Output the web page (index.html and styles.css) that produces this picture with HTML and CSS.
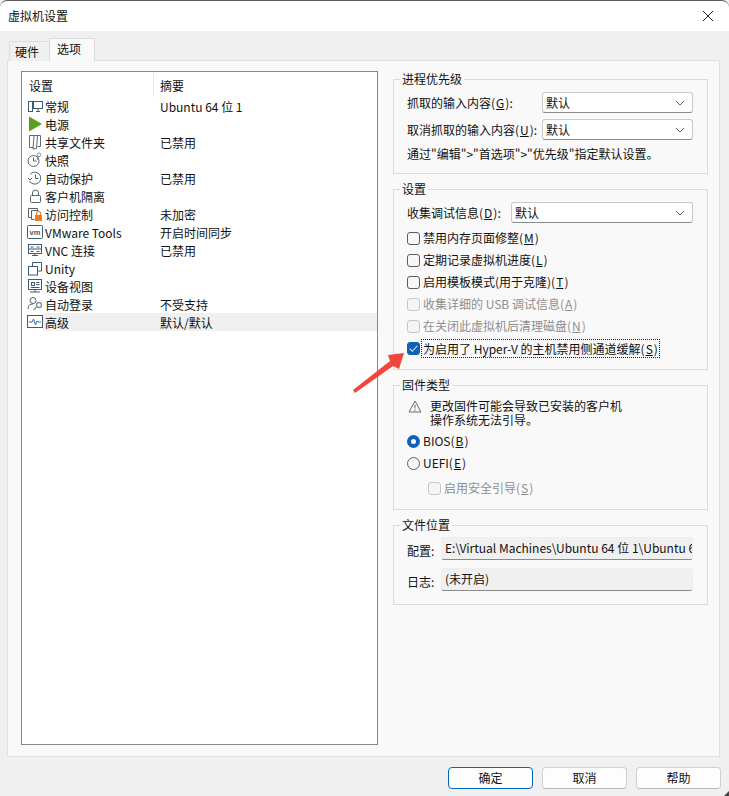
FILE: index.html
```html
<!DOCTYPE html>
<html lang="zh-CN">
<head>
<meta charset="utf-8">
<title>虚拟机设置</title>
<link rel="stylesheet" href="styles.css">
</head>
<body>
<div class="window">
  <header class="titlebar">
    <span>虚拟机设置</span>
    <svg class="close" viewBox="0 0 12 12"><path d="M1 1l10 10M11 1L1 11"/></svg>
  </header>
  <nav class="tabs">
    <div class="tab">硬件</div>
    <div class="tab active">选项</div>
  </nav>
  <main class="panel">
    <section class="list">
      <div class="list-head">
        <span class="head-a">设置</span>
        <span class="head-b">摘要</span>
      </div>
      <div class="row">
        <svg class="ico" viewBox="0 0 16 16"><g fill="none" stroke="#3f5b73"><rect x="1.500" y="3.500" width="4" height="10"/><rect x="6.500" y="3.500" width="9" height="7"/><path d="M9 13.500h4M11 11v2"/></g></svg>
        <div class="row-body"><span class="name">常规</span><span>Ubuntu 64 位 1</span></div>
      </div>
      <div class="row">
        <svg class="ico" viewBox="0 0 16 16"><path d="M2 0.500L15 8 2 15.500z" fill="#5a9e1c"/></svg>
        <div class="row-body"><span class="name">电源</span></div>
      </div>
      <div class="row">
        <svg class="ico" viewBox="0 0 16 16"><g fill="none" stroke="#5c6b78"><path d="M2.500 1.500h11v11h-3M2.500 1.500v12h4M7.500 1.500l3 0-1 13-3.500 0.500 1-13z"/></g></svg>
        <div class="row-body"><span class="name">共享文件夹</span><span>已禁用</span></div>
      </div>
      <div class="row">
        <svg class="ico" viewBox="0 0 16 16"><g fill="none" stroke="#56636e"><circle cx="6.500" cy="9" r="5.500"/><path d="M6.500 5.500V9h3"/><path d="M11 8V4" stroke="#8a949c" stroke-width="2"/><circle cx="12" cy="2.800" r="1.800" stroke="#8a949c"/></g></svg>
        <div class="row-body"><span class="name">快照</span></div>
      </div>
      <div class="row">
        <svg class="ico" viewBox="0 0 16 16"><g fill="none" stroke="#56636e"><path d="M3.200 4.200A6 6 0 1 1 2.500 11"/><path d="M8.500 4.500V8.500h3"/><path d="M1 8l2 2 2-2"/></g></svg>
        <div class="row-body"><span class="name">自动保护</span><span>已禁用</span></div>
      </div>
      <div class="row">
        <svg class="ico" viewBox="0 0 16 16"><g fill="none" stroke="#56636e"><rect x="3.500" y="7.500" width="10" height="7" rx="1"/><path d="M5.500 7.500V5a3 3 0 0 1 6 0v2.500"/></g></svg>
        <div class="row-body"><span class="name">客户机隔离</span></div>
      </div>
      <div class="row">
        <svg class="ico" viewBox="0 0 16 16"><g fill="none" stroke="#56636e"><path d="M4.500 11.500h-3v-9h9v2"/><path d="M7.500 13.500h-3v-9h7"/></g><rect x="8" y="9" width="7" height="6" fill="#f07c1e"/><path d="M9.500 9V7.500a2 2 0 0 1 4 0V9" fill="none" stroke="#f07c1e" stroke-width="1.200"/></svg>
        <div class="row-body"><span class="name">访问控制</span><span>未加密</span></div>
      </div>
      <div class="row">
        <svg class="ico" viewBox="0 0 16 16"><rect x="0.500" y="1.500" width="15" height="13" rx="1" fill="none" stroke="#3f5b73"/><text x="8" y="10.500" class="vm">vm</text></svg>
        <div class="row-body"><span class="name">VMware Tools</span><span>开启时间同步</span></div>
      </div>
      <div class="row">
        <svg class="ico" viewBox="0 0 16 16"><g fill="none" stroke="#3f5b73"><rect x="1.500" y="2.500" width="13" height="9"/><path d="M1.500 7h13M5 13.500h6M8 11.500v2M3.500 5h3M9.500 5h3M3.500 9.500h3M9.500 9.500h3"/></g></svg>
        <div class="row-body"><span class="name">VNC 连接</span><span>已禁用</span></div>
      </div>
      <div class="row">
        <svg class="ico" viewBox="0 0 16 16"><g fill="none" stroke="#3f5b73"><rect x="1.500" y="6.500" width="9" height="8.500"/><path d="M5.500 6.500V2.500h9v8.500h-4"/></g></svg>
        <div class="row-body"><span class="name">Unity</span></div>
      </div>
      <div class="row">
        <svg class="ico" viewBox="0 0 16 16"><g fill="none" stroke="#3f5b73"><rect x="1.500" y="1.500" width="13" height="10"/><rect x="4.500" y="4.500" width="3" height="3"/><path d="M9 4.500h3.500M9 6.500h3.500M4 9.500h8.500M3 14h10M8 11.500V14"/></g></svg>
        <div class="row-body"><span class="name">设备视图</span></div>
      </div>
      <div class="row">
        <svg class="ico" viewBox="0 0 16 16"><g fill="none" stroke="#56636e"><circle cx="6" cy="4.500" r="3"/><path d="M1 13c0-3.500 2-5 5-5"/><circle cx="12" cy="9" r="2.500" stroke="#8a949c" stroke-width="1.400"/><path d="M10 10.500L6.500 14" stroke="#8a949c" stroke-width="1.400"/></g></svg>
        <div class="row-body"><span class="name">自动登录</span><span>不受支持</span></div>
      </div>
      <div class="row selected">
        <svg class="ico" viewBox="0 0 16 16"><rect x="0.500" y="1.500" width="15" height="12" fill="none" stroke="#3f5b73"/><path d="M2 8h3l1.500-3 2 6 1.500-4 1 1h3" fill="none" stroke="#2b6ea6"/></svg>
        <div class="row-body"><span class="name">高级</span><span>默认/默认</span></div>
      </div>
    </section>

    <section class="side">
      <fieldset class="group g-priority">
        <legend>进程优先级</legend>
        <div class="form-row label-wide">
          <span class="form-label">抓取的输入内容(<u>G</u>):</span>
          <div class="combo"><span>默认</span><svg viewBox="0 0 10 6"><path d="M1 1l4 4 4-4"/></svg></div>
        </div>
        <div class="form-row label-wide">
          <span class="form-label">取消抓取的输入内容(<u>U</u>):</span>
          <div class="combo"><span>默认</span><svg viewBox="0 0 10 6"><path d="M1 1l4 4 4-4"/></svg></div>
        </div>
        <p class="hint">通过"编辑"&gt;"首选项"&gt;"优先级"指定默认设置。</p>
      </fieldset>

      <fieldset class="group g-settings">
        <legend>设置</legend>
        <div class="form-row label-mid">
          <span class="form-label">收集调试信息(<u>D</u>):</span>
          <div class="combo"><span>默认</span><svg viewBox="0 0 10 6"><path d="M1 1l4 4 4-4"/></svg></div>
        </div>
        <div class="checks">
          <label class="check"><i class="box"></i>禁用内存页面修整(<u>M</u>)</label>
          <label class="check"><i class="box"></i>定期记录虚拟机进度(<u>L</u>)</label>
          <label class="check"><i class="box"></i>启用模板模式(用于克隆)(<u>T</u>)</label>
          <label class="check off"><i class="box"></i>收集详细的 USB 调试信息(<u>A</u>)</label>
          <label class="check off"><i class="box"></i>在关闭此虚拟机后清理磁盘(<u>N</u>)</label>
          <label class="check on"><i class="box"><svg viewBox="0 0 10 10"><path d="M1.500 5.200l2.400 2.300 4.600-5"/></svg></i><span class="focus">为启用了 Hyper-V 的主机禁用侧通道缓解(<u>S</u>)</span></label>
        </div>
      </fieldset>

      <fieldset class="group g-firmware">
        <legend>固件类型</legend>
        <div class="warn">
          <svg viewBox="0 0 14 13"><path d="M7 1l6 11H1z" fill="none" stroke="#6b6b6b"/><path d="M7 4.500v4M7 9.500v1.500" stroke="#6b6b6b"/></svg>
          <p>更改固件可能会导致已安装的客户机<br>操作系统无法引导。</p>
        </div>
        <label class="radio checked"><i class="dot"></i>BIOS(<u>B</u>)</label>
        <label class="radio"><i class="dot"></i>UEFI(<u>E</u>)</label>
        <label class="check off secure"><i class="box"></i>启用安全引导(<u>S</u>)</label>
      </fieldset>

      <fieldset class="group g-files">
        <legend>文件位置</legend>
        <div class="file-row tall">
          <span class="form-label">配置:</span>
          <div class="file-field">E:\Virtual Machines\Ubuntu 64 位 1\Ubuntu 64 位 1.vmx</div>
        </div>
        <div class="file-row">
          <span class="form-label">日志:</span>
          <div class="file-field">(未开启)</div>
        </div>
      </fieldset>
    </section>
  </main>
  <footer class="actions">
    <button class="btn primary">确定</button>
    <button class="btn">取消</button>
    <button class="btn">帮助</button>
  </footer>
  <svg class="grip" viewBox="0 0 6 6"><path d="M6 0v6H0z"/></svg>
  <svg class="arrow" viewBox="0 0 60 50"><path d="M1 42L38 13 36 7 52 5 47 21 41 18 3 45z"/></svg>
</div>
</body>
</html>
```
FILE: styles.css
```css
* { box-sizing: border-box; }
html, body { margin: 0; padding: 0; background: #f0f0f0; }
body {
  font-family: "Noto Sans CJK SC", "Liberation Sans", sans-serif;
  font-size: 12px;
  line-height: 16px;
  color: #111;
}
u { margin: 0 1px; }
.window {
  position: relative;
  width: 729px;
  height: 796px;
  display: flex;
  flex-direction: column;
  overflow: hidden;
  background: #f0f0f0;
}
.titlebar {
  height: 31px;
  flex: none;
  background: #fff;
  border-top: 1px solid #5a5a5a;
  border-radius: 7px 7px 0 0;
  padding: 0 15px 0 8px;
  display: flex;
  align-items: center;
  justify-content: space-between;
}
.close { width: 12px; height: 12px; }
.close path { fill: none; stroke: #222; stroke-width: 1; }
.tabs {
  height: 30px;
  flex: none;
  display: flex;
  align-items: flex-end;
  padding-left: 9px;
  margin-bottom: -1px;
  position: relative;
  z-index: 1;
}
.tab {
  width: 41px;
  height: 20px;
  padding-left: 5px;
  line-height: 20px;
  border: 1px solid #dcdcdc;
  border-bottom: 0;
  background: #f0f0f0;
}
.tab.active {
  width: 46px;
  height: 23px;
  margin-left: -1px;
  padding-left: 7px;
  line-height: 19px;
  background: #f9f9f9;
}
.panel {
  flex: none;
  width: 713px;
  height: 697px;
  margin-left: 7px;
  padding: 10px 0 0 13px;
  background: #f9f9f9;
  border: 1px solid #e0e0e0;
  display: flex;
  align-items: flex-start;
}
.list {
  width: 357px;
  height: 674px;
  flex: none;
  background: #fff;
  border: 1px solid #828790;
}
.list-head {
  height: 25px;
  display: flex;
  align-items: flex-start;
  padding-top: 1px;
}
.head-a { width: 131px; padding-left: 7px; flex: none; line-height: 26px; }
.head-b {
  padding-left: 6px;
  border-left: 1px solid #e5e5e5;
  height: 24px;
  line-height: 26px;
}
.row { height: 18px; display: flex; align-items: center; padding-left: 5px; }
.ico { width: 16px; height: 16px; flex: none; }
.vm { font: 700 7.500px "Liberation Sans", sans-serif; text-anchor: middle; fill: #3f5b73; }
.row-body {
  flex: 1;
  height: 18px;
  line-height: 20px;
  display: flex;
  padding-left: 2px;
  white-space: nowrap;
}
.name { width: 115px; flex: none; }
.selected .row-body { background: #f0f0f0; }
.side {
  width: 315px;
  margin-left: 15px;
  flex: none;
  display: flex;
  flex-direction: column;
  gap: 7px;
}
.group {
  margin: 0;
  min-width: 0;
  padding: 5px 14px 0 13px;
  border: 1px solid #dcdcdc;
}
.group legend { margin-left: -7px; padding: 0 2px; line-height: 16px; }
.g-priority { height: 103px; }
.g-settings { height: 189px; }
.g-firmware { height: 133px; }
.g-files { height: 88px; padding-top: 4px; }
.form-row { display: flex; align-items: center; height: 21px; margin-bottom: 6px; }
.form-label { flex: none; white-space: nowrap; }
.label-wide .form-label { width: 135px; }
.label-mid .form-label { width: 104px; }
.combo {
  flex: 1;
  height: 21px;
  background: #fff;
  border: 1px solid #c8c8c8;
  border-bottom-color: #8a8a8a;
  border-radius: 3px;
  padding: 0 7px 0 3px;
  line-height: 19px;
  display: flex;
  align-items: center;
  justify-content: space-between;
}
.combo svg { width: 10px; height: 6px; }
.combo path { fill: none; stroke: #5f5f5f; }
.hint { margin: 0; line-height: 16px; white-space: nowrap; }
.checks { margin-top: -2px; }
.check { display: flex; align-items: center; height: 22px; white-space: nowrap; }
.box {
  width: 13px;
  height: 13px;
  margin-right: 3px;
  flex: none;
  border: 1px solid #5d5d5d;
  border-radius: 3px;
  background: #f7f7f7;
  display: flex;
}
.off { color: #8e8e8e; }
.off .box { border-color: #c6c6c6; background: #f5f5f5; }
.on .box { background: #0f62b8; border-color: #0f62b8; }
.on .box svg { width: 11px; height: 11px; }
.on .box path { fill: none; stroke: #dbe8f7; stroke-width: 1; }
.focus { outline: 1px dotted #222; padding: 0 1px; margin-left: -1px; line-height: 17px; }
.warn { display: flex; align-items: flex-start; height: 31px; margin-top: 1px; }
.warn svg { width: 14px; height: 13px; margin: 1px 8px 0 1px; flex: none; }
.warn p { margin: 0; line-height: 14px; }
.radio { display: flex; align-items: center; height: 22px; }
.dot {
  width: 13px;
  height: 13px;
  margin-right: 3px;
  flex: none;
  border: 1px solid #5d5d5d;
  border-radius: 50%;
  background: #f7f7f7;
}
.radio.checked .dot { background: #fff; border: 4px solid #0f62b8; }
.secure { margin: 3px 0 0 21px; }
.file-row { display: flex; height: 23px; margin-bottom: 8px; align-items: center; }
.file-row .form-label { width: 34px; padding-top: 5px; }
.file-field {
  width: 252px;
  height: 23px;
  flex: none;
  background: #f0f0f0;
  border: 1px solid #ededed;
  border-bottom-color: #8a8a8a;
  border-radius: 3px;
  padding: 0 4px 0 3px;
  line-height: 19px;
  white-space: nowrap;
  overflow: hidden;
}
.actions {
  flex: 1;
  display: flex;
  justify-content: flex-end;
  gap: 9px;
  padding: 10px 8px 0 0;
}
.btn {
  width: 85px;
  height: 22px;
  padding: 0;
  font: inherit;
  color: #111;
  background: #fdfdfd;
  border: 1px solid #d0d0d0;
  border-bottom-color: #b8b8b8;
  border-radius: 4px;
}
.btn.primary { border: 1px solid #0067c0; }
.grip { position: absolute; right: 0; bottom: 0; width: 5px; height: 5px; }
.grip path { fill: #444; }
.arrow {
  position: absolute;
  left: 352px;
  top: 348px;
  width: 60px;
  height: 50px;
}
.arrow path { fill: #f1453d; }
```
